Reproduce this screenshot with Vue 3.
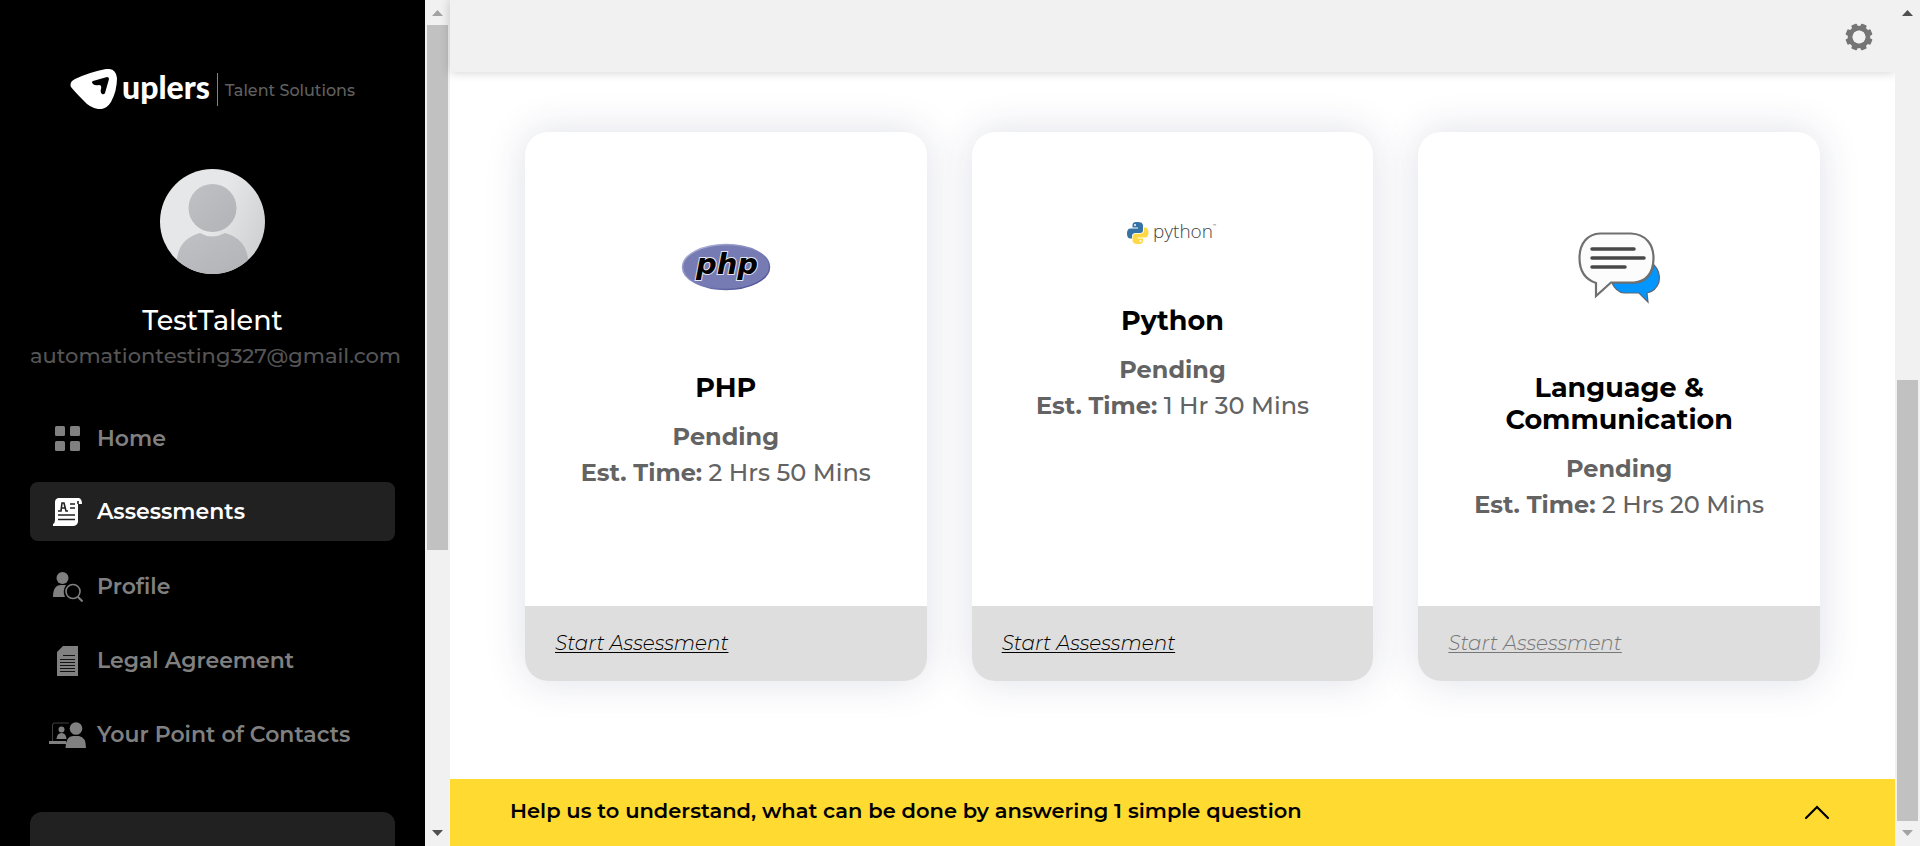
<script setup>
const navItems = [
  { id: 'home', label: 'Home' },
  { id: 'assessments', label: 'Assessments', active: true },
  { id: 'profile', label: 'Profile' },
  { id: 'legal', label: 'Legal Agreement' },
  { id: 'contacts', label: 'Your Point of Contacts' },
]

const cards = [
  { id: 'php', title: 'PHP', time: '2 Hrs 50 Mins' },
  { id: 'python', title: 'Python', time: '1 Hr 30 Mins' },
  { id: 'language', title: 'Language & Communication', time: '2 Hrs 20 Mins', disabled: true },
]
</script>

<template>
  <div class="app">
    <aside class="sidebar">
      <a class="brand" href="#" aria-label="Uplers Talent Solutions">
        <svg class="brand-mark" viewBox="0 0 47 40" width="47" height="40" aria-hidden="true">
          <path fill="#fff" fill-rule="evenodd" d="M5 10 Q20 3 36 0 Q46-1 47 9 Q47 22 41 33 Q36 41 28 40 Q20 39 13 31 Q5 23 1 18 Q-1 13 5 10Z M23 12 Q21 13 23 15 Q25 17 29 16 Q32 16 31 20 Q30 23 32 25 Q34 26 35 24 L39 10 Q39 8 37 8Z" />
        </svg>
        <span class="brand-name">uplers</span>
        <span class="brand-sub">Talent Solutions</span>
      </a>

      <div class="user">
        <svg class="avatar" viewBox="0 0 105 105" width="105" height="105" aria-hidden="true">
          <defs>
            <linearGradient id="avatarBack" x1="0" y1="0.3" x2="1" y2="0.7">
              <stop offset="0.5" stop-color="#e6e7e8" />
              <stop offset="1" stop-color="#cfd0d2" />
            </linearGradient>
            <linearGradient id="avatarFront" x1="0" y1="0" x2="1" y2="1">
              <stop offset="0" stop-color="#bfc1c4" />
              <stop offset="1" stop-color="#b1b3b6" />
            </linearGradient>
            <clipPath id="avatarClip"><circle cx="52.5" cy="52.5" r="52.5" /></clipPath>
          </defs>
          <g clip-path="url(#avatarClip)">
            <rect width="105" height="105" fill="url(#avatarBack)" />
            <circle cx="52.5" cy="39" r="24" fill="url(#avatarFront)" />
            <path d="M17 90 Q19 70 40 64 Q52 71 65 64 Q86 70 88 90 V105 H17Z" fill="url(#avatarFront)" />
          </g>
        </svg>
        <div class="user-name">TestTalent</div>
        <div class="user-mail">automationtesting327@gmail.com</div>
      </div>

      <nav class="nav">
        <a v-for="item in navItems" :key="item.id" href="#" class="nav-item" :class="{ active: item.active }">
          <span class="nav-icon">
            <svg v-if="item.id === 'home'" viewBox="0 0 25 25" width="25" height="25" fill="currentColor" aria-hidden="true">
              <rect width="10" height="10" rx="1.5" /><rect x="15" width="10" height="10" rx="1.5" />
              <rect y="15" width="10" height="10" rx="1.5" /><rect x="15" y="15" width="10" height="10" rx="1.5" />
            </svg>
            <svg v-else-if="item.id === 'assessments'" viewBox="0 0 29 28" width="29" height="28" aria-hidden="true">
              <path fill="currentColor" d="M5 0 H26 Q29 1 29 6 H25 V24 Q24 28 20 28 H0 V26 Q2 25 2 22 V4 Q2 1 5 0Z" />
              <path fill="none" stroke="#222" stroke-width="1.6" d="M5 13 H8 L9 5 H11 L13 13 H15 M8 10 H12 M17 6 H22 M17 10 H22 M5 17 H22 M5 21.500 H22 M25 6 V3" />
            </svg>
            <svg v-else-if="item.id === 'profile'" viewBox="0 0 30 30" width="30" height="30" aria-hidden="true">
              <circle cx="9.5" cy="6" r="6" fill="currentColor" />
              <path fill="currentColor" d="M0 25 Q0 13 8 13 H13 Q9 19 12 25Z" />
              <circle cx="20" cy="19.5" r="7" fill="none" stroke="currentColor" stroke-width="1.6" />
              <path d="M25 25 L29.500 29.500" stroke="currentColor" stroke-width="2" />
            </svg>
            <svg v-else-if="item.id === 'legal'" viewBox="0 0 21 30" width="21" height="30" aria-hidden="true">
              <path fill="currentColor" d="M6 0 H21 V30 H0 V6Z" />
              <path stroke="#111" stroke-width="1.2" d="M6 9.500 H18 M3 13.500 H18 M3 16.500 H18 M3 19.500 H18 M3 22.500 H18 M3 25.500 H18" />
            </svg>
            <svg v-else viewBox="0 0 37 26" width="37" height="26" fill="currentColor" aria-hidden="true">
              <path fill="none" stroke="currentColor" stroke-opacity="0.5" d="M3.500 19 V3 Q3.500 1 5.500 1 H20" />
              <circle cx="12.5" cy="7.5" r="3" />
              <path d="M7.500 17 Q8 11 12.500 11 Q17 11 17.500 17Z" />
              <rect y="19" width="17" height="3" />
              <circle cx="27" cy="6.5" r="6.3" />
              <path d="M16.500 26 Q17 14 24 14 H30 Q37 15 37 26Z" />
            </svg>
          </span>
          <span>{{ item.label }}</span>
        </a>
      </nav>
      <div class="side-panel"></div>
    </aside>

    <div class="scrollbar side-scroll" aria-hidden="true">
      <svg class="faded" viewBox="0 0 25 25" width="25" height="25"><path d="M7 16 L12.500 10 L18 16Z" /></svg>
      <div class="track"><div class="thumb"></div></div>
      <svg viewBox="0 0 25 25" width="25" height="25"><path d="M7 9 L12.500 15 L18 9Z" /></svg>
    </div>

    <div class="content">
      <header class="topbar">
        <button class="icon-button" type="button" aria-label="Settings">
          <svg viewBox="0 0 28 28" width="28" height="28" aria-hidden="true">
            <g fill="#757575">
              <rect v-for="n in 8" :key="n" x="11" y="0.5" width="6" height="7" rx="1" :transform="`rotate(${n * 45 - 22.5} 14 14)`" />
            </g>
            <circle cx="14" cy="14" r="9" fill="none" stroke="#757575" stroke-width="4.5" />
          </svg>
        </button>
      </header>

      <main class="main">
        <article v-for="card in cards" :key="card.id" class="card">
          <div class="card-body">
            <svg v-if="card.id === 'php'" viewBox="0 0 90 90" width="90" height="90" role="img" aria-label="PHP logo">
              <defs>
                <linearGradient id="phpEdge" x1="0" y1="0" x2="1" y2="1">
                  <stop offset="0" stop-color="#b9bcdd" /><stop offset="1" stop-color="#41458f" />
                </linearGradient>
              </defs>
              <ellipse cx="45" cy="45" rx="43.5" ry="22.5" fill="#777bb3" stroke="url(#phpEdge)" stroke-width="1.5" />
              <text class="php-text" x="46" y="52" text-anchor="middle">php</text>
            </svg>
            <svg v-else-if="card.id === 'python'" class="python-logo" viewBox="0 0 90 23" width="90" height="23" role="img" aria-label="Python logo">
              <path fill="#3572a5" d="M10.500 0 C6 0 5.500 1.500 5.500 3.500 V5.500 H11 V6.500 H3.500 C1 6.500 0 8.500 0 11.500 C0 14.500 1 16.500 3.500 16.500 H5 V14 C5 12 6.500 11 8.500 11 H13 C15 11 16 10 16 8 V3.500 C16 1 14 0 10.500 0Z" />
              <path fill="#ffd845" d="M10.900 22 C15.500 22 16 20.500 16 18.500 V16.500 H10.500 V15.500 H18 C20.500 15.500 21.500 13.500 21.500 10.500 C21.500 7.500 20.500 5.500 18 5.500 H17 V8.500 C17 10.500 15.500 11.700 13 11.700 H8.500 C6.500 11.700 5.500 13 5.500 15 V18.500 C5.500 21 7.500 22 10.900 22Z" />
              <circle cx="8" cy="3" r="1" fill="#fff" /><circle cx="13.5" cy="19" r="1" fill="#fff" />
              <text class="python-text" x="26" y="16">python</text>
              <text class="python-tm" x="86" y="5">™</text>
            </svg>
            <svg v-else viewBox="0 0 90 90" width="90" height="90" role="img" aria-label="Speech bubbles">
              <path fill="#0496ff" stroke="#5b6670" stroke-width="1.2" d="M80 43 Q87 50 85 60 Q82 69 73 71 L74 80 L65 71 H50 Q42 70 38 61 H62 Q76 59 80 43Z" />
              <path fill="#fcfcfc" stroke="#707070" stroke-width="2.2" d="M26 11.500 H57 C72 12 79.500 23 79.500 36 C79.500 52 71 60 60 60.500 H37 L22 74 L22 61 C10 57 5.500 47 5.500 36 C5.500 21 14 12 26 11.500Z" />
              <path stroke="#484848" stroke-width="3.5" stroke-linecap="round" d="M18 27 H60 M18 36 H70 M18 45 H51" />
            </svg>
            <h2 class="card-title">{{ card.title }}</h2>
            <p class="card-info"><strong>Pending</strong></p>
            <p class="card-info"><strong>Est. Time:</strong> {{ card.time }}</p>
          </div>
          <footer class="card-foot">
            <a href="#" class="start" :class="{ disabled: card.disabled }" :aria-disabled="card.disabled">Start Assessment</a>
          </footer>
        </article>
      </main>

      <button class="survey" type="button" aria-expanded="false">
        <span class="survey-text">Help us to understand, what can be done by answering 1 simple question</span>
        <svg viewBox="0 0 26 15" width="26" height="15" aria-hidden="true">
          <path d="M2 13 L13 2 L24 13" fill="none" stroke="#000" stroke-width="2.2" stroke-linecap="round" />
        </svg>
      </button>
    </div>

    <div class="scrollbar page-scroll" aria-hidden="true">
      <svg viewBox="0 0 25 25" width="25" height="25"><path d="M7 16 L12.500 10 L18 16Z" /></svg>
      <div class="track"><div class="thumb"></div></div>
      <svg class="faded" viewBox="0 0 25 25" width="25" height="25"><path d="M7 9 L12.500 15 L18 9Z" /></svg>
    </div>
  </div>
</template>

<style>
body {
  margin: 0;
  background: #fff;
}
</style>

<style scoped>
.app {
  display: flex;
  height: 100vh;
  overflow: hidden;
  font-family: Montserrat, Inter, sans-serif;
  font-size: 22px;
  color: #000;
}

.sidebar {
  flex: 0 0 365px;
  display: flex;
  flex-direction: column;
  padding: 68px 30px 0;
  background: #000;
  overflow: hidden;
}

.brand {
  display: flex;
  align-items: center;
  gap: 5px;
  height: 42px;
  margin-left: 40px;
  text-decoration: none;
  white-space: nowrap;
}

.brand-mark {
  flex: none;
}

.brand-name {
  margin-bottom: 4px;
  color: #fff;
  font-family: Lato, sans-serif;
  font-size: 32px;
  font-weight: 900;
  line-height: 36px;
}

.brand-sub {
  margin-left: 2px;
  padding: 2px 0 0 7px;
  border-left: 1px solid #a58513;
  color: #606060;
  font-size: 16px;
  font-weight: 500;
  line-height: 31px;
}

.user {
  display: flex;
  flex-direction: column;
  align-items: center;
  margin-top: 59px;
  color: #fff;
}

.user-name {
  margin-top: 30px;
  font-size: 27px;
  font-weight: 500;
  line-height: 34px;
}

.user-mail {
  align-self: flex-start;
  color: #555;
  font-size: 21px;
  font-weight: 500;
  line-height: 36px;
  white-space: nowrap;
}

.nav {
  display: flex;
  flex-direction: column;
  gap: 15px;
  margin-top: 34px;
}

.nav-item {
  display: flex;
  align-items: center;
  gap: 11px;
  height: 59px;
  padding: 2px 0 0 19px;
  box-sizing: border-box;
  border-radius: 8px;
  color: #808080;
  font-weight: 600;
  text-decoration: none;
  white-space: nowrap;
}

.nav-item.active {
  padding-top: 0;
  background: #212121;
  color: #fff;
}

.nav-icon {
  display: flex;
  justify-content: center;
  width: 37px;
}

.side-panel {
  flex: 1;
  margin-top: 49px;
  border-radius: 12px 12px 0 0;
  background: #212121;
}

.scrollbar {
  flex: 0 0 25px;
  display: flex;
  flex-direction: column;
  background: #f1f1f1;
}

.scrollbar svg {
  flex: none;
  fill: #505050;
}

.scrollbar svg.faded {
  fill: #a3a3a3;
}

.track {
  flex: 1;
  display: flex;
  flex-direction: column;
  padding: 0 2px;
}

.thumb {
  background: #c1c1c1;
}

.side-scroll .thumb {
  height: 66%;
}

.page-scroll .thumb {
  height: 55.4%;
  margin-top: auto;
}

.content {
  flex: 1;
  min-width: 0;
  display: flex;
  flex-direction: column;
}

.topbar {
  flex: none;
  display: flex;
  justify-content: flex-end;
  align-items: center;
  height: 72px;
  padding: 1px 22px 0 0;
  box-sizing: border-box;
  background: #f1f1f1;
  box-shadow: 0 0 10px rgba(0, 0, 0, 0.2);
}

.icon-button {
  display: flex;
  padding: 0;
  border: 0;
  background: none;
}

.main {
  flex: 1;
  display: grid;
  grid-template-columns: repeat(3, 1fr);
  align-items: stretch;
  gap: 45px;
  padding: 60px 75px 98px;
}

.card {
  display: flex;
  flex-direction: column;
  border-radius: 23px;
  background: #fff;
  box-shadow: 0 0 40px rgba(40, 50, 110, 0.15);
  overflow: hidden;
}

.card-body {
  flex: 1;
  display: flex;
  flex-direction: column;
  align-items: center;
  padding: 90px 45px 0;
  text-align: center;
}

.card-title {
  margin: 60px 0 15px;
  font-size: 27px;
  font-weight: 700;
  line-height: 32px;
}

.card-info {
  margin: 0;
  color: #636363;
  font-size: 24px;
  font-weight: 500;
  line-height: 36px;
  white-space: nowrap;
}

.card-info strong {
  font-weight: 700;
}

.card-foot {
  height: 75px;
  display: flex;
  align-items: center;
  padding: 0 30px 2px;
  box-sizing: border-box;
  background: #dedede;
}

.start {
  color: #000;
  font-size: 20px;
  font-style: italic;
  font-weight: 300;
  text-decoration-thickness: 1px;
  text-underline-offset: 2px;
}

.start.disabled {
  color: #777;
}

.survey {
  flex: none;
  display: flex;
  justify-content: space-between;
  align-items: center;
  height: 67px;
  padding: 0 65px 0 60px;
  border: 0;
  background: #ffda30;
  color: #000;
  font: inherit;
  font-size: 21px;
  font-weight: 600;
}

.survey-text {
  padding-bottom: 4px;
}

.php-text {
  font: italic bold 29px "DejaVu Sans", sans-serif;
  paint-order: stroke;
  stroke: #e4e4ee;
  stroke-width: 2px;
}

.python-logo {
  overflow: visible;
}

.python-text {
  fill: #444;
  font: 300 19px "Open Sans", sans-serif;
}

.python-tm {
  fill: #646464;
  font: 4px "Open Sans", sans-serif;
}
</style>
